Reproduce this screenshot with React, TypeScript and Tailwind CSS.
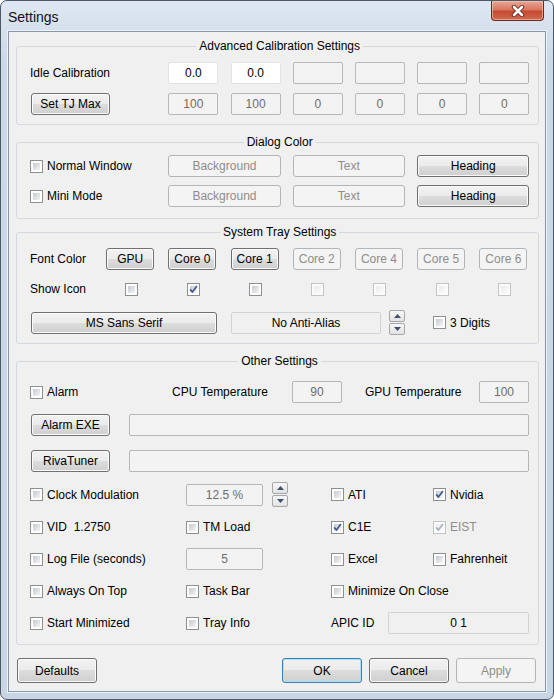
import React from "react";

const FONT = "font-['Liberation_Sans',Arial,sans-serif]";

type BtnProps = {
  children?: React.ReactNode;
  className?: string;
  disabled?: boolean;
  focused?: boolean;
};

function Btn({ children, className = "", disabled, focused }: BtnProps) {
  const base = "flex items-center justify-center rounded-[3px] border whitespace-nowrap";
  const style = disabled
    ? "border-[#b2b6b9] bg-[#f4f4f4] text-[#8d8d8d]"
    : focused
    ? "border-[#3c7fb1] bg-[linear-gradient(#f2f2f2,#ebebeb_50%,#dddddd_50%,#cfcfcf)] shadow-[inset_0_0_0_1px_#a9e2f7] text-black"
    : "border-[#707070] bg-[linear-gradient(#f2f2f2,#ebebeb_50%,#dddddd_50%,#cfcfcf)] shadow-[inset_0_0_0_1px_#fbfbfb] text-black";
  return <div className={`${base} ${style} ${className}`}>{children}</div>;
}

type FieldProps = {
  children?: React.ReactNode;
  className?: string;
  variant?: "white" | "plain" | "ro";
};

function Field({ children, className = "", variant = "ro" }: FieldProps) {
  const v =
    variant === "white"
      ? "bg-white border-[#e1e3e8] text-black"
      : variant === "plain"
      ? "bg-[#f0f0f0] border-[#d3d3d3] text-black"
      : "bg-[#f3f3f3] border-[#b7b7b7] text-[#6d6d6d]";
  return (
    <div className={`h-[22px] flex items-center justify-center rounded-[2px] border ${v} ${className}`}>
      {children}
    </div>
  );
}

function Check({ checked, disabled }: { checked?: boolean; disabled?: boolean }) {
  return (
    <div
      className={`relative w-[13px] h-[13px] shrink-0 border p-[2px] ${
        disabled ? "border-[#c2c4c6] bg-[#fbfbfb]" : "border-[#8e8f8f] bg-white"
      }`}
    >
      <div
        className={`w-full h-full ${
          disabled
            ? "bg-[linear-gradient(135deg,#ececec,#fafafa)]"
            : "bg-[linear-gradient(135deg,#c5c9cf,#f5f5f6)]"
        }`}
      />
      {checked && (
        <svg className="absolute left-0 top-0" width="11" height="11" viewBox="0 0 11 11">
          <path
            d="M2.2 5.4 L4.4 8 L8.9 2"
            fill="none"
            stroke={disabled ? "#a9b0bd" : "#41568f"}
            strokeWidth="1.7"
          />
        </svg>
      )}
    </div>
  );
}

function CheckLabel({
  label,
  checked,
  disabled,
}: {
  label: string;
  checked?: boolean;
  disabled?: boolean;
}) {
  return (
    <div className="flex items-center gap-[4px] whitespace-pre">
      <Check checked={checked} disabled={disabled} />
      <span className={disabled ? "text-[#8d8d8d]" : ""}>{label}</span>
    </div>
  );
}

function Spin() {
  const part =
    "h-[12px] w-[16px] border border-[#a5a7aa] rounded-[2px] bg-[linear-gradient(#f7f7f7,#e2e2e2)] flex items-center justify-center";
  return (
    <div className="flex flex-col gap-[1px] w-[16px] shrink-0">
      <div className={part}>
        <svg width="7" height="4" viewBox="0 0 7 4">
          <path d="M0 4 L3.5 0 L7 4 Z" fill="#42506e" />
        </svg>
      </div>
      <div className={part}>
        <svg width="7" height="4" viewBox="0 0 7 4">
          <path d="M0 0 L3.5 4 L7 0 Z" fill="#42506e" />
        </svg>
      </div>
    </div>
  );
}

function Group({
  title,
  className = "",
  children,
}: {
  title: string;
  className?: string;
  children?: React.ReactNode;
}) {
  return (
    <fieldset className={`w-[523px] border border-[#d3d9de] rounded-[3px] pl-[13px] pr-[9px] ${className}`}>
      <legend className="mx-auto px-[3px] leading-[14px]">{title}</legend>
      {children}
    </fieldset>
  );
}

const GRID7 = "grid grid-cols-[64px_repeat(7,50px)] gap-x-[12.2px] items-center";

export default function App() {
  return (
    <div
      className={`w-[554px] h-[700px] flex flex-col rounded-[7px] border border-[#4a5868] bg-[linear-gradient(180deg,#dfe8f2,#cbd8e6_60px,#c8d5e3)] overflow-hidden text-[12px] leading-[14px] text-black ${FONT}`}
    >
      {/* Title bar */}
      <div className="h-[30px] flex items-start shrink-0">
        <div className="pl-[7px] pt-[8px] text-[14px] leading-[16px] text-[#111]">Settings</div>
        <div className="ml-auto mr-[9px] w-[53px] h-[20px] rounded-b-[4px] border border-t-0 border-[#6b2a20] bg-[linear-gradient(#e9a797,#d9775f_45%,#c64a30_55%,#d06a4e)] shadow-[inset_0_0_0_1px_rgba(255,210,200,0.55)] flex items-center justify-center">
          <svg width="16" height="12" viewBox="0 0 16 12">
            <path d="M4 2 L12 10 M12 2 L4 10" stroke="#6a2419" strokeWidth="4.4" strokeLinecap="round" />
            <path d="M4 2 L12 10 M12 2 L4 10" stroke="#ffffff" strokeWidth="2.6" strokeLinecap="round" />
          </svg>
        </div>
      </div>

      {/* Client area */}
      <div className="mx-[7px] mb-[7px] flex-1 border border-[#8797ab] shadow-[0_0_0_1px_#eef3f8] bg-[#f0f0f0] pt-[7px] pl-[7px] flex flex-col">
        {/* Advanced Calibration Settings */}
        <Group title="Advanced Calibration Settings" className="pt-[9px] pb-[9px]">
          <div className={`${GRID7} gap-y-[9px]`}>
            <div className="col-span-2 h-[22px] flex items-center">Idle Calibration</div>
            <Field variant="white">0.0</Field>
            <Field variant="white">0.0</Field>
            <Field />
            <Field />
            <Field />
            <Field />
            <div className="col-span-2">
              <Btn className="ml-[1px] w-[79px] h-[22px]">Set TJ Max</Btn>
            </div>
            <Field>100</Field>
            <Field>100</Field>
            <Field>0</Field>
            <Field>0</Field>
            <Field>0</Field>
            <Field>0</Field>
          </div>
        </Group>

        {/* Dialog Color */}
        <Group title="Dialog Color" className="mt-[10px] pt-[6px] pb-[11px]">
          <div className={`${GRID7} gap-y-[8px]`}>
            <div className="col-span-2 h-[22px] flex items-center">
              <CheckLabel label="Normal Window" />
            </div>
            <Btn disabled className="col-span-2 h-[22px]">Background</Btn>
            <Btn disabled className="col-span-2 h-[22px]">Text</Btn>
            <Btn className="col-span-2 h-[22px]">Heading</Btn>
            <div className="col-span-2 h-[22px] flex items-center">
              <CheckLabel label="Mini Mode" />
            </div>
            <Btn disabled className="col-span-2 h-[22px]">Background</Btn>
            <Btn disabled className="col-span-2 h-[22px]">Text</Btn>
            <Btn className="col-span-2 h-[22px]">Heading</Btn>
          </div>
        </Group>

        {/* System Tray Settings */}
        <Group title="System Tray Settings" className="mt-[6px] pt-[9px] pb-[8px]">
          <div className={`${GRID7} gap-y-[8px]`}>
            <div className="h-[22px] flex items-center whitespace-nowrap">Font Color</div>
            <Btn className="w-[48px] h-[22px]">GPU</Btn>
            <Btn className="w-[48px] h-[22px]">Core 0</Btn>
            <Btn className="w-[48px] h-[22px]">Core 1</Btn>
            <Btn disabled className="w-[48px] h-[22px]">Core 2</Btn>
            <Btn disabled className="w-[48px] h-[22px]">Core 4</Btn>
            <Btn disabled className="w-[48px] h-[22px]">Core 5</Btn>
            <Btn disabled className="w-[48px] h-[22px]">Core 6</Btn>

            <div className="h-[22px] flex items-center whitespace-nowrap">Show Icon</div>
            <div className="justify-self-center"><Check /></div>
            <div className="justify-self-center"><Check checked /></div>
            <div className="justify-self-center"><Check /></div>
            <div className="justify-self-center"><Check disabled /></div>
            <div className="justify-self-center"><Check disabled /></div>
            <div className="justify-self-center"><Check disabled /></div>
            <div className="justify-self-center"><Check disabled /></div>
          </div>
          <div className="mt-[10px] h-[25px] flex items-center">
            <Btn className="ml-[1px] w-[186px] h-[22px]">MS Sans Serif</Btn>
            <Field variant="plain" className="ml-[14px] w-[150px]">No Anti-Alias</Field>
            <div className="ml-[8px]">
              <Spin />
            </div>
            <div className="ml-[28px]">
              <CheckLabel label="3 Digits" />
            </div>
          </div>
        </Group>

        {/* Other Settings */}
        <Group title="Other Settings" className="mt-[10px] pt-[13px] pb-[10px]">
          <div className="h-[22px] flex items-center">
            <div className="w-[142px]">
              <CheckLabel label="Alarm" />
            </div>
            <div className="w-[120px]">CPU Temperature</div>
            <Field className="w-[50px]">90</Field>
            <div className="ml-[23px] w-[114px]">GPU Temperature</div>
            <Field className="w-[50px]">100</Field>
          </div>

          <div className="mt-[11px] h-[22px] flex items-center">
            <Btn className="ml-[1px] w-[79px] h-[22px]">Alarm EXE</Btn>
            <Field className="ml-[19px] w-[400px]" />
          </div>

          <div className="mt-[14px] h-[22px] flex items-center">
            <Btn className="ml-[1px] w-[79px] h-[22px]">RivaTuner</Btn>
            <Field className="ml-[19px] w-[400px]" />
          </div>

          <div className="mt-[10px] h-[22px] grid grid-cols-[156px_145px_102px_1fr] items-center">
            <CheckLabel label="Clock Modulation" />
            <div className="flex items-center">
              <Field className="w-[77px]">12.5 %</Field>
              <div className="ml-[9px]">
                <Spin />
              </div>
            </div>
            <CheckLabel label="ATI" />
            <CheckLabel label="Nvidia" checked />
          </div>

          <div className="mt-[12px] h-[22px] grid grid-cols-[156px_145px_102px_1fr] items-center">
            <CheckLabel label="VID  1.2750" />
            <CheckLabel label="TM Load" />
            <CheckLabel label="C1E" checked />
            <CheckLabel label="EIST" checked disabled />
          </div>

          <div className="mt-[10px] h-[22px] grid grid-cols-[156px_145px_102px_1fr] items-center">
            <CheckLabel label="Log File (seconds)" />
            <Field className="w-[77px]">5</Field>
            <CheckLabel label="Excel" />
            <CheckLabel label="Fahrenheit" />
          </div>

          <div className="mt-[10px] h-[22px] grid grid-cols-[156px_145px_102px_1fr] items-center">
            <CheckLabel label="Always On Top" />
            <CheckLabel label="Task Bar" />
            <div className="col-span-2">
              <CheckLabel label="Minimize On Close" />
            </div>
          </div>

          <div className="mt-[10px] h-[22px] grid grid-cols-[156px_145px_102px_1fr] items-center">
            <CheckLabel label="Start Minimized" />
            <CheckLabel label="Tray Info" />
            <div className="col-span-2 flex items-center">
              <div className="w-[57px]">APIC ID</div>
              <Field variant="plain" className="w-[141px]">0 1</Field>
            </div>
          </div>
        </Group>

        {/* Bottom buttons */}
        <div className="mt-[13px] w-[523px] h-[25px] flex">
          <Btn className="ml-[1px] w-[80px] h-[25px]">Defaults</Btn>
          <div className="ml-auto mr-[3px] flex gap-[7px]">
            <Btn focused className="w-[80px] h-[25px]">OK</Btn>
            <Btn className="w-[80px] h-[25px]">Cancel</Btn>
            <Btn disabled className="w-[80px] h-[25px]">Apply</Btn>
          </div>
        </div>
      </div>
    </div>
  );
}
